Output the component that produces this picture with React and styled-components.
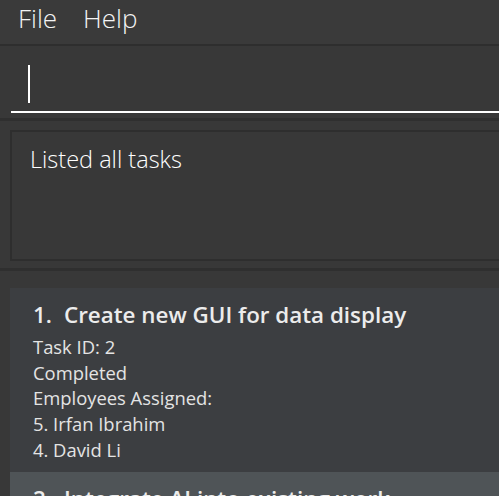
import styled, { createGlobalStyle } from "styled-components";

const GlobalStyle = createGlobalStyle`
  html, body {
    margin: 0;
    padding: 0;
    background: #383838;
    overflow: hidden;
  }
`;

const Window = styled.div`
  width: 499px;
  height: 496px;
  display: flex;
  flex-direction: column;
  background: #383838;
  font-family: "Open Sans", "Noto Sans", sans-serif;
  color: #ffffff;
  overflow: hidden;

  & > * {
    flex-shrink: 0;
  }
`;

const MenuBar = styled.div`
  height: 46px;
  box-sizing: border-box;
  display: flex;
  align-items: flex-start;
  gap: 26px;
  padding: 0 0 0 18px;
  background: #3a3a3a;
  border-bottom: 2px solid #2e2e2e;
`;

const MenuItem = styled.span`
  font-size: 26px;
  line-height: normal;
  font-weight: 300;
  color: #f4f4f4;
`;

const CommandPane = styled.div`
  height: 75px;
  padding: 11px 0 0 11px;
  box-sizing: border-box;
  border-bottom: 3px solid #2f2f2f;
`;

const CommandField = styled.div`
  height: 54px;
  border-bottom: 2px solid #ffffff;
  display: flex;
  align-items: center;
  padding-left: 17px;
`;

const Caret = styled.div`
  width: 2px;
  height: 38px;
  background: #ffffff;
`;

const ResultPane = styled.div`
  height: 150px;
  padding: 9px 0 0 10px;
  box-sizing: border-box;
  border-bottom: 3px solid #2f2f2f;
`;

const ResultBox = styled.div`
  height: 131px;
  border: 2px solid #2e2e2e;
  border-right: none;
  box-sizing: border-box;
  padding: 11px 0 0 18px;
  font-size: 23.5px;
  font-weight: 300;
  color: #ffffff;
`;

const ListPane = styled.div`
  flex: 1;
  padding: 17px 0 0 10px;
`;

const Card = styled.div`
  background: ${(p) => (p.$odd ? "#4f5457" : "#3c3e41")};
  padding: 12px 0 9px 23px;
`;

const Title = styled.div`
  font-size: 22.4px;
  font-weight: 600;
  color: #ececec;
  line-height: 30px;
  margin-bottom: 4px;
  white-space: nowrap;
`;

const Index = styled.span`
  display: inline-block;
  width: 31px;
`;

const Detail = styled.div`
  font-size: 18.4px;
  color: #e4e4e4;
  line-height: 25.7px;
  white-space: nowrap;
`;

const tasks = [
  {
    title: "Create new GUI for data display",
    details: ["Task ID: 2", "Completed", "Employees Assigned:", "5. Irfan Ibrahim", "4. David Li"],
  },
  {
    title: "Integrate AI into existing work",
    details: ["Task ID: 3"],
  },
];

export default function App() {
  return (
    <Window>
      <GlobalStyle />
      <MenuBar>
        <MenuItem>File</MenuItem>
        <MenuItem>Help</MenuItem>
      </MenuBar>
      <CommandPane>
        <CommandField>
          <Caret />
        </CommandField>
      </CommandPane>
      <ResultPane>
        <ResultBox>Listed all tasks</ResultBox>
      </ResultPane>
      <ListPane>
        {tasks.map((t, i) => (
          <Card key={i} $odd={i % 2 === 1}>
            <Title>
              <Index>{i + 1}.</Index>
              {t.title}
            </Title>
            {t.details.map((d) => (
              <Detail key={d}>{d}</Detail>
            ))}
          </Card>
        ))}
      </ListPane>
    </Window>
  );
}
